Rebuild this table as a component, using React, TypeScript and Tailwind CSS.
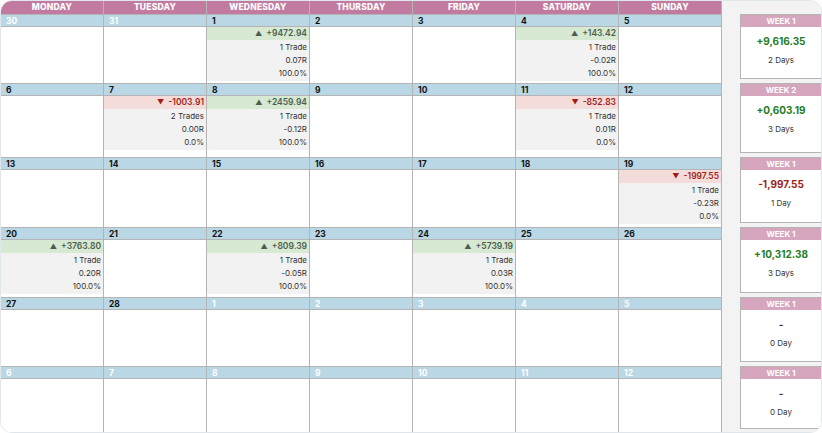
type Day = {
  d: number;
  out?: boolean;
  pnl?: string;
  up?: boolean;
  trades?: string;
  r?: string;
  win?: string;
};

type Week = {
  days: Day[];
  label: string;
  total: string;
  tone: 'up' | 'down' | 'none';
  count: string;
  h: string;
};

const dayNames = ['Monday', 'Tuesday', 'Wednesday', 'Thursday', 'Friday', 'Saturday', 'Sunday'];

const weeks: Week[] = [
  {
    days: [
      { d: 30, out: true },
      { d: 31, out: true },
      { d: 1, pnl: '+9472.94', up: true, trades: '1 Trade', r: '0.07R', win: '100.0%' },
      { d: 2 },
      { d: 3 },
      { d: 4, pnl: '+143.42', up: true, trades: '1 Trade', r: '-0.02R', win: '100.0%' },
      { d: 5 },
    ],
    label: 'WEEK 1',
    total: '+9,616.35',
    tone: 'up',
    count: '2 Days',
    h: 'h-[69px]',
  },
  {
    days: [
      { d: 6 },
      { d: 7, pnl: '-1003.91', up: false, trades: '2 Trades', r: '0.00R', win: '0.0%' },
      { d: 8, pnl: '+2459.94', up: true, trades: '1 Trade', r: '-0.12R', win: '100.0%' },
      { d: 9 },
      { d: 10 },
      { d: 11, pnl: '-852.83', up: false, trades: '1 Trade', r: '0.01R', win: '0.0%' },
      { d: 12 },
    ],
    label: 'WEEK 2',
    total: '+0,603.19',
    tone: 'up',
    count: '3 Days',
    h: 'h-[74px]',
  },
  {
    days: [
      { d: 13 },
      { d: 14 },
      { d: 15 },
      { d: 16 },
      { d: 17 },
      { d: 18 },
      { d: 19, pnl: '-1997.55', up: false, trades: '1 Trade', r: '-0.23R', win: '0.0%' },
    ],
    label: 'WEEK 1',
    total: '-1,997.55',
    tone: 'down',
    count: '1 Day',
    h: 'h-[70px]',
  },
  {
    days: [
      { d: 20, pnl: '+3763.80', up: true, trades: '1 Trade', r: '0.20R', win: '100.0%' },
      { d: 21 },
      { d: 22, pnl: '+809.39', up: true, trades: '1 Trade', r: '-0.05R', win: '100.0%' },
      { d: 23 },
      { d: 24, pnl: '+5739.19', up: true, trades: '1 Trade', r: '0.03R', win: '100.0%' },
      { d: 25 },
      { d: 26 },
    ],
    label: 'WEEK 1',
    total: '+10,312.38',
    tone: 'up',
    count: '3 Days',
    h: 'h-[70px]',
  },
  {
    days: [
      { d: 27 },
      { d: 28 },
      { d: 1, out: true },
      { d: 2, out: true },
      { d: 3, out: true },
      { d: 4, out: true },
      { d: 5, out: true },
    ],
    label: 'WEEK 1',
    total: '-',
    tone: 'none',
    count: '0 Day',
    h: 'h-[69px]',
  },
  {
    days: [6, 7, 8, 9, 10, 11, 12].map((d) => ({ d, out: true })),
    label: 'WEEK 1',
    total: '-',
    tone: 'none',
    count: '0 Day',
    h: 'h-[67px]',
  },
];

function DayCell({ day }: { day: Day }) {
  return (
    <div className="flex flex-col border-r border-t border-[#b4b4b4] bg-white">
      {/* Date strip */}
      <div
        className={`h-[12px] border-b border-[#b4b4b4] bg-[#b9d7e4] px-[5px] text-[8.5px] font-bold leading-[12px] ${
          day.out ? 'text-white' : 'text-[#111]'
        }`}
      >
        {day.d}
      </div>

      {day.pnl && (
        <div className="flex flex-col">
          <div
            className={`h-[13px] pr-[2px] text-right text-[8.5px] font-semibold leading-[13px] ${
              day.up ? 'bg-[#d7e8d3] text-[#4b5d4e]' : 'bg-[#f4dcdb] text-[#a11d16]'
            }`}
          >
            <span className="mr-[4px] text-[7px]">{day.up ? '▲' : '▼'}</span>
            {day.pnl}
          </div>
          <div className="bg-[#f2f2f2] pb-[1px] pr-[2px] pt-[1px] text-right text-[8px] leading-[13px] text-[#333]">
            <div>{day.trades}</div>
            <div>{day.r}</div>
            <div>{day.win}</div>
          </div>
        </div>
      )}
    </div>
  );
}

function WeekCard({ week }: { week: Week }) {
  const toneClass =
    week.tone === 'up' ? 'text-[#1f7d1f]' : week.tone === 'down' ? 'text-[#9c1d16]' : 'text-[#333]';

  return (
    <div className="flex flex-col bg-[#f3f3f3] pb-[4px] pl-[18px]">
      <div className="flex w-[100px] flex-1 flex-col border border-[#b4b4b4] bg-white">
        <div className="h-[12px] bg-[#d5a6bd] pr-[18px] text-center text-[8px] font-bold leading-[12px] text-white">
          {week.label}
        </div>
        <div className="flex flex-1 flex-col items-center pr-[18px] pt-[7px]">
          <div className={`text-[10px] font-bold leading-[14px] ${toneClass}`}>{week.total}</div>
          <div className="mt-[6px] text-[8px] leading-[12px] text-[#333]">{week.count}</div>
        </div>
      </div>
    </div>
  );
}

export default function App() {
  return (
    <div
      className="h-[433px] w-[822px] overflow-hidden rounded-[12px] border border-[#e1e6ec] bg-white"
      style={{ fontFamily: 'Inter, "Noto Sans", sans-serif' }}
    >
      <div className="grid grid-cols-[repeat(7,103px)_1fr]">
        {/* Weekday header */}
        {dayNames.map((name) => (
          <div
            key={name}
            className="h-[13px] border-r border-[#b4b4b4] bg-[#c27ba0] text-center text-[8.5px] font-extrabold uppercase leading-[13px] tracking-[0.2px] text-white"
          >
            {name}
          </div>
        ))}
        <div className="h-[13px] bg-[#f3f3f3]" />

        {weeks.map((week, i) => (
          <div key={i} className="contents">
            {week.days.map((day, j) => (
              <div key={j} className={`${week.h} grid`}>
                <DayCell day={day} />
              </div>
            ))}
            <div className={`${week.h} grid`}>
              <WeekCard week={week} />
            </div>
          </div>
        ))}
      </div>
    </div>
  );
}
